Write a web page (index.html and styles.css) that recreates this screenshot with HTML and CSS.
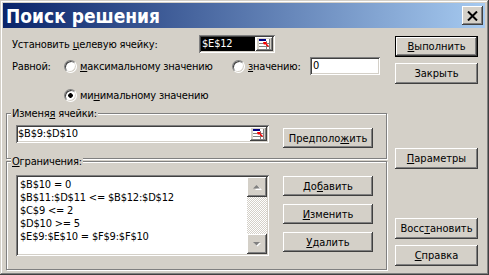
FILE: index.html
```html
<!DOCTYPE html>
<html lang="ru">
<head>
  <meta charset="UTF-8" />
  <title>Поиск решения</title>
  <link rel="stylesheet" href="styles.css">
</head>
<body>
  <div class="window">
    <div class="titlebar">
      <span class="title">Поиск решения</span>
      <span class="close-btn">
        <svg width="11" height="10" viewBox="0 0 11 10">
          <path d="M1 0.5 L10 9.5 M10 0.5 L1 9.5" stroke="#000" stroke-width="2" fill="none"/>
        </svg>
      </span>
    </div>

    <div class="body">
      <div class="main">
        <div class="row row-target">
          <span class="label-target">Установить <u>ц</u>елевую ячейку:</span>
          <div class="field field-target">
            <span class="sel">$E$12</span>
            <span class="ref-btn">
              <svg width="12" height="10" viewBox="0 0 12 10">
                <rect x="0" y="0" width="11" height="10" fill="#fff"/>
                <rect x="0" y="0" width="7" height="2" fill="#000080"/>
                <path d="M0 4.5 H11 M0 7.5 H11 M7.5 2 V10 M10.5 0 V10" stroke="#808080" stroke-width="1"/>
                <path d="M4 3 L8 3 L7 4 L10 7 L9 8 L6 5 L5 6 Z" fill="#f00"/>
              </svg>
            </span>
          </div>
        </div>

        <div class="row row-equal">
          <span class="label-equal">Равной:</span>
          <span class="radio"></span>
          <span class="opt-max"><u>м</u>аксимальному значению</span>
          <span class="radio"></span>
          <span class="opt-value"><u>з</u>начению:</span>
          <div class="field field-value">0</div>
        </div>

        <div class="row row-min">
          <span class="radio checked"></span>
          <span>ми<u>н</u>имальному значению</span>
        </div>

        <fieldset class="group group-cells">
          <legend>Изменя<u>я</u> ячейки:</legend>
          <div class="cells-row">
            <div class="field field-cells">
              <span class="field-text">$B$9:$D$10</span>
              <span class="ref-btn">
                <svg width="12" height="10" viewBox="0 0 12 10">
                  <rect x="0" y="0" width="11" height="10" fill="#fff"/>
                  <rect x="0" y="0" width="7" height="2" fill="#000080"/>
                  <path d="M0 4.5 H11 M0 7.5 H11 M7.5 2 V10 M10.5 0 V10" stroke="#808080" stroke-width="1"/>
                  <path d="M4 3 L8 3 L7 4 L10 7 L9 8 L6 5 L5 6 Z" fill="#f00"/>
                </svg>
              </span>
            </div>
            <button class="btn btn-guess">Предполо<u>ж</u>ить</button>
          </div>
        </fieldset>

        <fieldset class="group group-limits">
          <legend><u>О</u>граничения:</legend>
          <div class="limits-row">
            <div class="listbox">
              <div class="list-lines">$B$10 = 0
$B$11:$D$11 &lt;= $B$12:$D$12
$C$9 &lt;= 2
$D$10 &gt;= 5
$E$9:$E$10 = $F$9:$F$10</div>
              <div class="scrollbar">
                <span class="scroll-btn">
                  <svg width="9" height="6" viewBox="0 0 9 6">
                    <path d="M1 5 L8 5 L4.5 1.5 Z" fill="#fff" transform="translate(1 1)"/>
                    <path d="M0 4.5 L7 4.5 L3.5 1 Z" fill="#808080"/>
                  </svg>
                </span>
                <span class="scroll-track"></span>
                <span class="scroll-btn">
                  <svg width="9" height="6" viewBox="0 0 9 6">
                    <path d="M0 1 L7 1 L3.5 4.5 Z" fill="#fff" transform="translate(1 1)"/>
                    <path d="M0 1 L7 1 L3.5 4.5 Z" fill="#808080"/>
                  </svg>
                </span>
              </div>
            </div>
            <div class="limit-btns">
              <button class="btn">До<u>б</u>авить</button>
              <button class="btn"><u>И</u>зменить</button>
              <button class="btn"><u>У</u>далить</button>
            </div>
          </div>
        </fieldset>
      </div>

      <div class="side">
        <button class="btn btn-default"><u>В</u>ыполнить</button>
        <button class="btn btn-close">Закрыть</button>
        <button class="btn btn-params"><u>П</u>араметры</button>
        <button class="btn btn-restore">Восс<u>т</u>ановить</button>
        <button class="btn btn-help"><u>С</u>правка</button>
      </div>
    </div>
  </div>
</body>
</html>
```

FILE: styles.css
```css
* {
  margin: 0;
  padding: 0;
  box-sizing: border-box;
}

body {
  background: #d4d0c8;
  font-family: "DejaVu Sans Condensed", "Liberation Sans", sans-serif;
  font-size: 11px;
  letter-spacing: -0.2px;
  color: #000;
}

.window {
  width: 489px;
  height: 275px;
  padding: 3px 4px 3px 3px;
  background: #d4d0c8;
  box-shadow: inset -1px -1px #404040, inset 1px 1px #d4d0c8,
              inset -2px -2px #808080, inset 2px 2px #fff;
  overflow: hidden;
}

.titlebar {
  height: 25px;
  display: flex;
  align-items: center;
  justify-content: space-between;
  padding-left: 3px;
  background: linear-gradient(to right, #0a246a, #a6caf0);
}

.title {
  color: #fff;
  font-weight: bold;
  font-size: 19px;
  letter-spacing: 0;
  line-height: 25px;
  padding-top: 1px;
}

.close-btn,
.ref-btn,
.scroll-btn,
.btn {
  background: #d4d0c8;
  box-shadow: inset -1px -1px #404040, inset 1px 1px #fff,
              inset -2px -2px #808080, inset 2px 2px #d4d0c8;
  display: flex;
  align-items: center;
  justify-content: center;
}

.close-btn {
  width: 21px;
  height: 19px;
  margin-right: 2px;
}

.body {
  display: flex;
  height: 244px;
}

.main {
  width: 381px;
  margin-left: 3px;
}

.row {
  display: flex;
  align-items: center;
  padding-left: 6px;
}

.row-target {
  height: 18px;
  margin-top: 7px;
}

.label-target {
  width: 187px;
}

.field {
  height: 18px;
  padding: 2px;
  display: flex;
  background: #fff;
  box-shadow: inset 1px 1px #808080, inset -1px -1px #fff,
              inset 2px 2px #404040, inset -2px -2px #d4d0c8;
  line-height: 14px;
}

.field-target {
  width: 76px;
}

.sel {
  flex: 1;
  margin-right: 1px;
  padding-left: 1px;
  background: #000;
  color: #fff;
}

.ref-btn {
  width: 17px;
  height: 14px;
}

.row-equal {
  height: 18px;
  margin-top: 4px;
}

.label-equal {
  width: 52px;
}

.radio {
  width: 13px;
  height: 13px;
  margin-right: 3px;
  border-radius: 50%;
  background: #fff;
  border: 1px solid;
  border-color: #808080 #fff #fff #808080;
  box-shadow: inset 1px 1px #404040, inset -1px -1px #d4d0c8;
  flex-shrink: 0;
}

.radio.checked {
  background: radial-gradient(circle, #000 0 2px, #fff 2.6px);
}

.opt-max {
  width: 152px;
}

.opt-value {
  width: 62px;
}

.field-value {
  width: 70px;
  padding-left: 3px;
}

.row-min {
  height: 17px;
  margin-top: 12px;
  padding-left: 58px;
}

.group {
  border: 1px solid #808080;
  box-shadow: inset 1px 1px #fff, 1px 1px #fff;
  min-width: 0;
}

.group legend {
  margin-left: -5px;
  padding: 0 1px;
  line-height: 15px;
  background: #d4d0c8;
}

.group-cells {
  margin-top: 2px;
  padding: 4px 0 10px 9px;
}

.cells-row,
.limits-row {
  display: flex;
  align-items: flex-start;
}

.field-cells {
  width: 253px;
}

.field-text {
  flex: 1;
}

.btn {
  border: none;
  font: inherit;
  color: #000;
  height: 20px;
}

.btn-guess {
  width: 90px;
  margin-left: 14px;
  margin-top: 3px;
}

.group-limits {
  margin-top: -5px;
  padding: 6px 0 13px 9px;
}

.listbox {
  width: 253px;
  height: 81px;
  padding: 2px;
  display: flex;
  background: #fff;
  box-shadow: inset 1px 1px #808080, inset -1px -1px #fff,
              inset 2px 2px #404040, inset -2px -2px #d4d0c8;
}

.list-lines {
  flex: 1;
  padding: 1px 2px 0;
  line-height: 13px;
  white-space: pre;
}

.scrollbar {
  width: 20px;
  display: flex;
  flex-direction: column;
}

.scroll-btn {
  height: 20px;
}

.scroll-track {
  flex: 1;
  background-image: repeating-conic-gradient(#d4d0c8 0 25%, #fff 0 50%);
  background-size: 2px 2px;
}

.limit-btns {
  margin-left: 14px;
  padding-top: 1px;
  display: flex;
  flex-direction: column;
  gap: 8px;
}

.limit-btns .btn {
  width: 90px;
}

.side {
  width: 83px;
  margin-left: 8px;
  padding-top: 8px;
  display: flex;
  flex-direction: column;
}

.side .btn {
  width: 83px;
  height: 21px;
}

.btn-default {
  box-shadow: inset 0 0 0 1px #000, inset -2px -2px #404040,
              inset 2px 2px #fff, inset -3px -3px #808080;
}

.btn-close {
  margin-top: 6px;
}

.btn-params {
  margin-top: 64px;
}

.btn-restore {
  margin-top: 49px;
}

.btn-help {
  margin-top: 6px;
}
```
